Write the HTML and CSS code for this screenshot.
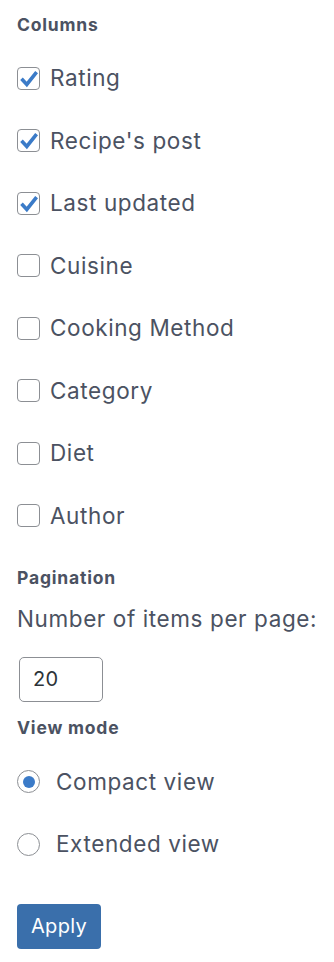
FILE: index.html
```html
<!DOCTYPE html>
<html lang="en">
<head>
<meta charset="utf-8">
<title>Screen options</title>
<link rel="stylesheet" href="styles.css">
</head>
<body>
<form class="panel">
  <h3 class="heading heading-columns">Columns</h3>
  <div class="check-list">
    <label class="check"><span class="box"><svg viewBox="0 0 23 23" width="23" height="23"><polyline points="4.5,11.8 9.8,17.4 19.6,5.2" fill="none" stroke="#3b7bc8" stroke-width="3.6" stroke-linejoin="miter"/></svg></span><span class="text">Rating</span></label>
    <label class="check"><span class="box"><svg viewBox="0 0 23 23" width="23" height="23"><polyline points="4.5,11.8 9.8,17.4 19.6,5.2" fill="none" stroke="#3b7bc8" stroke-width="3.6" stroke-linejoin="miter"/></svg></span><span class="text">Recipe's post</span></label>
    <label class="check"><span class="box"><svg viewBox="0 0 23 23" width="23" height="23"><polyline points="4.5,11.8 9.8,17.4 19.6,5.2" fill="none" stroke="#3b7bc8" stroke-width="3.6" stroke-linejoin="miter"/></svg></span><span class="text">Last updated</span></label>
    <label class="check"><span class="box"></span><span class="text">Cuisine</span></label>
    <label class="check"><span class="box"></span><span class="text">Cooking Method</span></label>
    <label class="check"><span class="box"></span><span class="text">Category</span></label>
    <label class="check"><span class="box"></span><span class="text">Diet</span></label>
    <label class="check"><span class="box"></span><span class="text">Author</span></label>
  </div>
  <h3 class="heading heading-pagination">Pagination</h3>
  <div class="field-label">Number of items per page:</div>
  <div class="number-input">20</div>
  <h3 class="heading heading-view">View mode</h3>
  <div class="radio-list">
    <label class="radio"><span class="circle checked"><span class="dot"></span></span><span class="text">Compact view</span></label>
    <label class="radio"><span class="circle"></span><span class="text">Extended view</span></label>
  </div>
  <div class="actions"><span class="button">Apply</span></div>
</form>
</body>
</html>
```

FILE: styles.css
```css
html, body {
  margin: 0;
  padding: 0;
  background: #ffffff;
}

body {
  font-family: Inter, "Noto Sans", sans-serif;
  color: #4b5262;
}

.panel {
  display: flex;
  flex-direction: column;
  align-items: flex-start;
  padding: 12.5px 0 0 17px;
}

.heading {
  margin: 0;
  font-size: 17.5px;
  font-weight: 700;
  letter-spacing: 0.8px;
  line-height: 24px;
  color: #4b5262;
}

.check-list {
  display: flex;
  flex-direction: column;
  gap: 39.5px;
  margin-top: 30.4px;
}

.check, .radio {
  display: flex;
  align-items: center;
  height: 23px;
  font-size: 22.5px;
  letter-spacing: 0.6px;
  line-height: 26px;
}

.box {
  width: 23px;
  height: 23px;
  box-sizing: border-box;
  border: 1px solid #8c8f94;
  border-radius: 4px;
  display: flex;
  align-items: center;
  justify-content: center;
  position: relative;
  flex: none;
}

.box svg {
  position: absolute;
  left: -1px;
  top: -1px;
}

.check .text {
  margin-left: 10px;
}

.heading-pagination {
  margin-top: 38.6px;
}

.field-label {
  margin-top: 16.5px;
  font-size: 22.5px;
  letter-spacing: 0.6px;
  line-height: 26px;
}

.number-input {
  margin-top: 24.5px;
  margin-left: 2px;
  width: 84px;
  height: 45px;
  box-sizing: border-box;
  border: 1px solid #8c8f94;
  border-radius: 5px;
  padding-left: 13px;
  display: flex;
  align-items: center;
  font-size: 20px;
  letter-spacing: 0.4px;
  color: #2c3338;
}

.heading-view {
  margin-top: 14px;
}

.radio-list {
  display: flex;
  flex-direction: column;
  gap: 39.5px;
  margin-top: 30.5px;
}

.circle {
  width: 23px;
  height: 23px;
  box-sizing: border-box;
  border: 1px solid #8c8f94;
  border-radius: 50%;
  display: flex;
  align-items: center;
  justify-content: center;
  flex: none;
}

.dot {
  width: 12px;
  height: 12px;
  border-radius: 50%;
  background: #3b7bc8;
}

.radio .text {
  margin-left: 16px;
}

.actions {
  margin-top: 48px;
}

.button {
  display: flex;
  align-items: center;
  justify-content: center;
  width: 84px;
  height: 45px;
  box-sizing: border-box;
  background: #3a6fab;
  border-radius: 4px;
  color: #ffffff;
  font-size: 20px;
  letter-spacing: 0.3px;
  line-height: 24px;
}
```
